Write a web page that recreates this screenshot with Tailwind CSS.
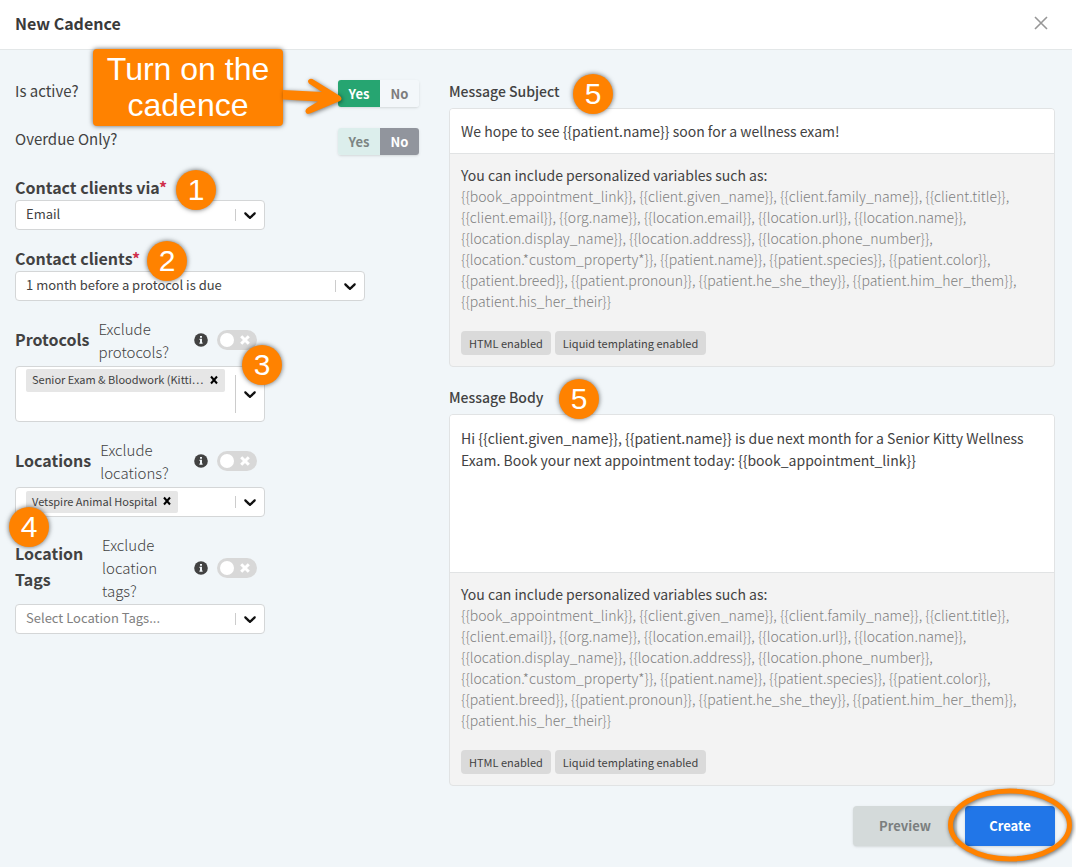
<!DOCTYPE html>
<html lang="en">

<head>
  <meta charset="UTF-8">
  <meta name="viewport" content="width=device-width, initial-scale=1.0">
  <title>New Cadence</title>
  <script src="https://cdn.jsdelivr.net/npm/@tailwindcss/browser@4"></script>
</head>

<body class="bg-white font-['Noto_Sans_CJK_SC',sans-serif] text-[#424242]">

  <!-- shared icons -->
  <svg class="hidden">
    <symbol id="chevron" viewBox="0 0 20 20">
      <path fill="currentColor" d="M4.516 7.548c0.436-0.446 1.043-0.481 1.576 0l3.908 3.747 3.908-3.747c0.533-0.481 1.141-0.446 1.574 0 0.436 0.445 0.408 1.197 0 1.615-0.406 0.418-4.695 4.502-4.695 4.502-0.217 0.223-0.502 0.335-0.787 0.335s-0.57-0.112-0.789-0.335c0 0-4.287-4.084-4.695-4.502s-0.436-1.17 0-1.615z" />
    </symbol>
    <symbol id="cross" viewBox="0 0 10 10">
      <path d="M1.2 1.2 L8.800 8.800 M8.800 1.200 L1.200 8.800" stroke="currentColor" stroke-width="3" />
    </symbol>
    <symbol id="remove" viewBox="0 0 10 10">
      <path d="M2 1.5 L8 8.5 M8 1.5 L2 8.5" stroke="currentColor" stroke-width="2" />
    </symbol>
    <symbol id="info" viewBox="0 0 14 14">
      <circle cx="7" cy="7" r="6.8" fill="#424242" />
      <path d="M6 3h2v1.800H6zM5.500 5.800H8v3.600h.6v1.300H5.400V9.400H6V7.100h-.5z" fill="#f1f6f9" />
    </symbol>
  </svg>

  <form class="relative mr-1 min-h-screen bg-[#f1f6f9]" onsubmit="return false">
    <header class="flex h-[50px] items-center justify-between border-b border-[#e3e7e8] bg-white pr-6 pb-1 pl-[15px]">
      <h1 class="text-[16px] leading-6 font-bold text-[#3a3a3a]">New Cadence</h1>
      <button type="button" aria-label="Close" class="p-0 text-[#979797]">
        <svg class="size-[14px]" viewBox="0 0 14 14"><path d="M1 1 L13 13 M13 1 L1 13" stroke="currentColor" stroke-width="1.6" /></svg>
      </button>
    </header>

    <main class="grid grid-cols-[2fr_3fr] gap-[30px] pt-[17px] pr-[17px] pl-[15px]">

      <section>
        <div class="flex h-12 items-center justify-between text-[15px]">
          <span>Is active?</span>
          <div class="mt-[5px] flex h-[27px] overflow-hidden rounded-[3px] text-[13px] font-bold shadow-sm">
            <button type="button" class="w-[42px] bg-[#26a571] text-white">Yes</button>
            <button type="button" class="w-[39px] bg-[#f3f7fa] text-[#7d7d7d]">No</button>
          </div>
        </div>
        <div class="flex h-12 items-center justify-between text-[15px]">
          <span>Overdue Only?</span>
          <div class="mt-[5px] flex h-[27px] overflow-hidden rounded-[3px] text-[13px] font-bold shadow-sm">
            <button type="button" class="w-[42px] bg-[#dceeec] text-[#7d8583]">Yes</button>
            <button type="button" class="w-[39px] bg-[#91959d] text-white">No</button>
          </div>
        </div>

        <div class="mt-[13px] mb-[17px]">
          <label for="via" class="mb-[2px] block text-[16px] leading-[22px] font-bold">Contact clients via<span class="text-[#d02f4b]">*</span></label>
          <div class="relative w-[250px]">
            <select id="via" class="block h-[30px] w-full appearance-none rounded-[4px] border border-[#d4d6d7] bg-white pb-[2px] pl-[10px] text-[13px]">
              <option>Email</option>
            </select>
            <span class="pointer-events-none absolute inset-y-0 right-0 my-[9px] flex items-center border-l border-[#ccc] pr-[5px] pl-1 text-[#111]"><svg class="size-5"><use href="#chevron" /></svg></span>
          </div>
        </div>

        <div class="mb-4">
          <label for="when" class="mb-[2px] block text-[16px] leading-[22px] font-bold">Contact clients<span class="text-[#d02f4b]">*</span></label>
          <div class="relative w-[350px]">
            <select id="when" class="block h-[30px] w-full appearance-none rounded-[4px] border border-[#d4d6d7] bg-white pb-[2px] pl-[10px] text-[13px]">
              <option>1 month before a protocol is due</option>
            </select>
            <span class="pointer-events-none absolute inset-y-0 right-0 my-[9px] flex items-center border-l border-[#ccc] pr-[5px] pl-1 text-[#111]"><svg class="size-5"><use href="#chevron" /></svg></span>
          </div>
        </div>

        <div class="mb-4 w-[250px]">
          <div class="mb-[3px] flex items-center pr-2">
            <label for="protocols" class="mr-[9px] pb-[2px] text-[16px] leading-[26px] font-bold">Protocols</label>
            <label for="exProtocols" class="w-[76px] text-[15px] leading-[23px] font-light">Exclude protocols?</label>
            <svg class="mr-[9px] ml-auto size-[14px]"><use href="#info" /></svg>
            <span class="flex h-5 w-10 items-center justify-between rounded-full bg-[#d8d8d8] pr-[7px] pl-[3px]">
              <input id="exProtocols" type="checkbox" class="size-[14px] appearance-none rounded-full bg-white">
              <svg class="size-[10px] text-white"><use href="#cross" /></svg>
            </span>
          </div>
          <div class="flex h-14 rounded-[4px] border border-[#d4d6d7] bg-white">
            <div class="flex min-w-0 flex-1 flex-wrap content-start pt-[2px] pl-[10px]">
              <span class="flex h-[23px] w-[199px] items-center justify-between rounded-[2px] bg-[#e6e6e6] px-[6px] pb-[2px] text-[11px]">Senior Exam &amp; Bloodwork (Kitti…
                <button type="button" aria-label="Remove" class="text-black"><svg class="size-[10px]"><use href="#remove" /></svg></button></span>
              <input id="protocols" type="text" class="w-full min-w-0 text-[13px] outline-none">
            </div>
            <span class="my-2 flex items-center border-l border-[#ccc] pr-1 pl-1 text-[#111]"><svg class="size-5"><use href="#chevron" /></svg></span>
          </div>
        </div>

        <div class="mb-4 w-[250px]">
          <div class="mb-[3px] flex items-center pr-2">
            <label for="locations" class="mr-[9px] pb-[2px] text-[16px] leading-[26px] font-bold">Locations</label>
            <label for="exLocations" class="w-[76px] text-[15px] leading-[23px] font-light">Exclude locations?</label>
            <svg class="mr-[9px] ml-auto size-[14px]"><use href="#info" /></svg>
            <span class="flex h-5 w-10 items-center justify-between rounded-full bg-[#d8d8d8] pr-[7px] pl-[3px]">
              <input id="exLocations" type="checkbox" class="size-[14px] appearance-none rounded-full bg-white">
              <svg class="size-[10px] text-white"><use href="#cross" /></svg>
            </span>
          </div>
          <div class="flex h-[30px] rounded-[4px] border border-[#d4d6d7] bg-white">
            <div class="flex min-w-0 flex-1 items-center pl-[10px]">
              <span class="flex h-[22px] w-[152px] items-center justify-between rounded-[2px] bg-[#e6e6e6] px-[6px] pb-[2px] text-[11px]">Vetspire Animal Hospital
                <button type="button" aria-label="Remove" class="text-black"><svg class="size-[10px]"><use href="#remove" /></svg></button></span>
              <input id="locations" type="text" class="min-w-0 flex-1 text-[13px] outline-none">
            </div>
            <span class="my-2 flex items-center border-l border-[#ccc] pr-1 pl-1 text-[#111]"><svg class="size-5"><use href="#chevron" /></svg></span>
          </div>
        </div>

        <div class="w-[250px]">
          <div class="mb-[2px] flex items-center pr-2">
            <label for="tags" class="mr-[9px] w-[78px] pb-[3px] text-[16px] leading-[26px] font-bold">Location Tags</label>
            <label for="exTags" class="w-[76px] text-[15px] leading-[23px] font-light">Exclude location tags?</label>
            <svg class="mr-[9px] ml-auto size-[14px]"><use href="#info" /></svg>
            <span class="flex h-5 w-10 items-center justify-between rounded-full bg-[#d8d8d8] pr-[7px] pl-[3px]">
              <input id="exTags" type="checkbox" class="size-[14px] appearance-none rounded-full bg-white">
              <svg class="size-[10px] text-white"><use href="#cross" /></svg>
            </span>
          </div>
          <div class="flex h-[30px] rounded-[4px] border border-[#d4d6d7] bg-white">
            <input id="tags" type="text" placeholder="Select Location Tags..." class="min-w-0 flex-1 pb-[2px] pl-[10px] text-[13px] outline-none placeholder:text-[#808080]">
            <span class="my-2 flex items-center border-l border-[#ccc] pr-1 pl-1 text-[#111]"><svg class="size-5"><use href="#chevron" /></svg></span>
          </div>
        </div>
      </section>

      <section class="pt-[13px]">
        <label for="subject" class="mb-[6px] block text-[14px] leading-[22px] font-medium">Message Subject</label>
        <div class="mb-[19px] overflow-hidden rounded-[4px] border border-[#e1e3e4] bg-[#f3f3f3]">
          <input id="subject" type="text" value="We hope to see {{patient.name}} soon for a wellness exam!" class="block h-[45px] w-full border-b border-[#e1e3e4] bg-white px-[11px] text-[14px] outline-none">
          <div class="px-[11px] py-[11px] text-[14px] leading-[21px]">
            <p>You can include personalized variables such as:</p>
            <p class="font-light text-[#808080]">{{book_appointment_link}}, {{client.given_name}}, {{client.family_name}}, {{client.title}}, {{client.email}}, {{org.name}}, {{location.email}}, {{location.url}}, {{location.name}}, {{location.display_name}}, {{location.address}}, {{location.phone_number}}, {{location.*custom_property*}}, {{patient.name}}, {{patient.species}}, {{patient.color}}, {{patient.breed}}, {{patient.pronoun}}, {{patient.he_she_they}}, {{patient.him_her_them}}, {{patient.his_her_their}}</p>
            <div class="mt-[19px] flex gap-1 text-[11px] leading-6">
              <span class="rounded-[4px] bg-[#dadada] px-2">HTML enabled</span>
              <span class="rounded-[4px] bg-[#dadada] px-2">Liquid templating enabled</span>
            </div>
          </div>
        </div>

        <label for="body" class="mb-[6px] block text-[14px] leading-[22px] font-medium">Message Body</label>
        <div class="overflow-hidden rounded-[4px] border border-[#e1e3e4] bg-[#f3f3f3]">
          <textarea id="body" class="block h-[158px] w-full resize-none border-b border-[#e1e3e4] bg-white px-[11px] py-3 text-[14px] leading-[22px] outline-none">Hi {{client.given_name}}, {{patient.name}} is due next month for a Senior Kitty Wellness Exam. Book your next appointment today: {{book_appointment_link}}</textarea>
          <div class="px-[11px] py-[11px] text-[14px] leading-[21px]">
            <p>You can include personalized variables such as:</p>
            <p class="font-light text-[#808080]">{{book_appointment_link}}, {{client.given_name}}, {{client.family_name}}, {{client.title}}, {{client.email}}, {{org.name}}, {{location.email}}, {{location.url}}, {{location.name}}, {{location.display_name}}, {{location.address}}, {{location.phone_number}}, {{location.*custom_property*}}, {{patient.name}}, {{patient.species}}, {{patient.color}}, {{patient.breed}}, {{patient.pronoun}}, {{patient.he_she_they}}, {{patient.him_her_them}}, {{patient.his_her_their}}</p>
            <div class="mt-[19px] flex gap-1 text-[11px] leading-6">
              <span class="rounded-[4px] bg-[#dadada] px-2">HTML enabled</span>
              <span class="rounded-[4px] bg-[#dadada] px-2">Liquid templating enabled</span>
            </div>
          </div>
        </div>

        <footer class="mt-5 flex justify-end gap-2 text-[13px] font-bold">
          <button type="button" class="h-10 w-[104px] rounded-[4px] bg-[#d4dada] text-[#7b7f7f] shadow-sm">Preview</button>
          <div class="relative">
            <button type="submit" class="h-10 w-[90px] rounded-[4px] bg-[#2176e8] text-white shadow-sm">Create</button>
            <svg class="pointer-events-none absolute -top-5 -left-5 h-[78px] w-[130px] drop-shadow-[1px_1px_2px_rgba(0,0,0,0.6)]" viewBox="0 0 130 78"><ellipse cx="65" cy="39" rx="59.5" ry="34" fill="none" stroke="#ff8200" stroke-width="5" /></svg>
          </div>
        </footer>
      </section>
    </main>

    <!-- step callouts -->
    <div class="absolute top-[49px] left-[93px] w-[190px] rounded-[4px] bg-[#ff8200] pt-[2px] pb-[3px] text-center font-['Liberation_Sans',sans-serif] text-[32px] leading-9 text-white shadow-[0_0_5px_rgba(0,0,0,0.6)]">Turn on the cadence</div>
    <svg class="absolute top-[74px] left-[280px] h-[46px] w-[66px] drop-shadow-[1px_1px_2px_rgba(0,0,0,0.5)]" viewBox="0 0 66 46"><path d="M3 16 L42 18 L29 9.500 Q27 7 29 5.500 Q31 4 34 6 L60 22 Q63 25 60 27 L30 39.500 Q26 41 25.500 37.500 Q25 35.500 28 33.500 L38 27.500 L3 25.500 Z" fill="#ff8200" /></svg>
    <div class="text-center font-['Liberation_Sans',sans-serif] text-[30px] leading-10 text-white">
      <span class="absolute top-[170px] left-[176px] size-10 rounded-full bg-[#ff8200] shadow-[0_0_5px_rgba(0,0,0,0.6)]">1</span>
      <span class="absolute top-[241px] left-[147px] size-10 rounded-full bg-[#ff8200] shadow-[0_0_5px_rgba(0,0,0,0.6)]">2</span>
      <span class="absolute top-[345px] left-[242px] size-10 rounded-full bg-[#ff8200] shadow-[0_0_5px_rgba(0,0,0,0.6)]">3</span>
      <span class="absolute top-[507px] left-[9px] size-10 rounded-full bg-[#ff8200] shadow-[0_0_5px_rgba(0,0,0,0.6)]">4</span>
      <span class="absolute top-[74px] left-[573px] size-10 rounded-full bg-[#ff8200] shadow-[0_0_5px_rgba(0,0,0,0.6)]">5</span>
      <span class="absolute top-[379px] left-[559px] size-10 rounded-full bg-[#ff8200] shadow-[0_0_5px_rgba(0,0,0,0.6)]">5</span>
    </div>
  </form>

</body>

</html>
